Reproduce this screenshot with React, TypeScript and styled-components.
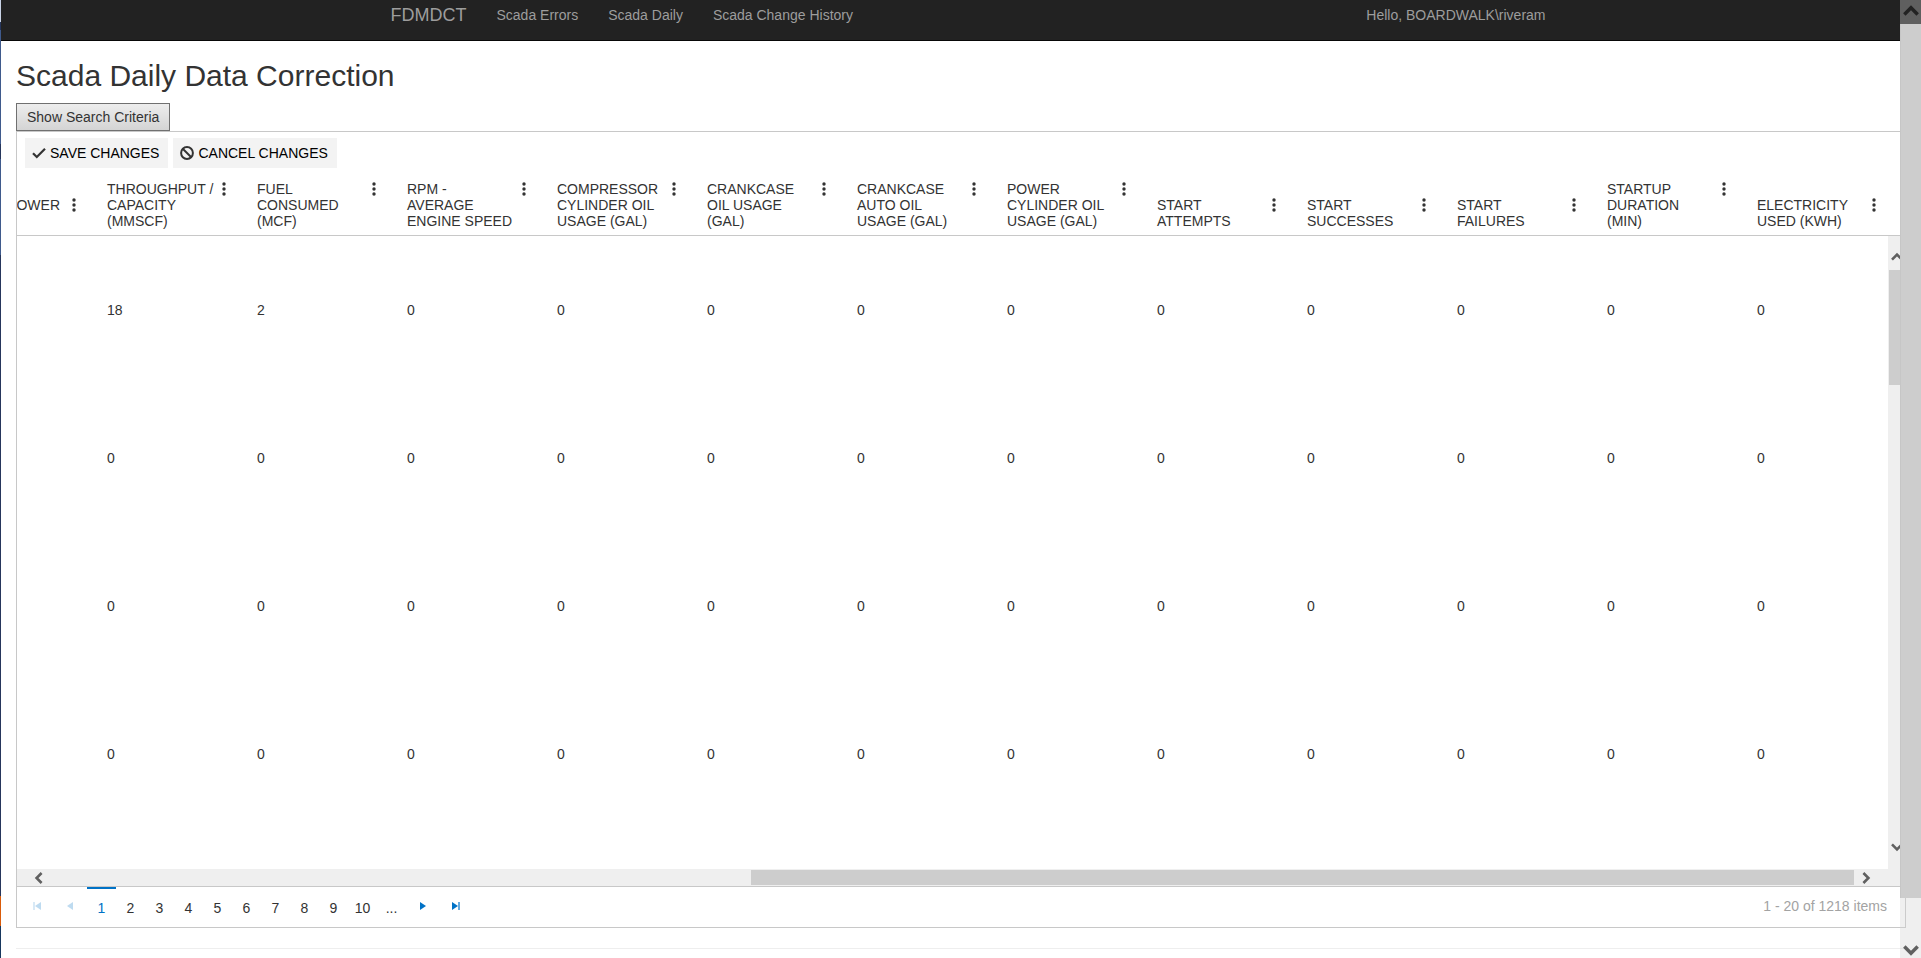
import React from "react";
import styled, { createGlobalStyle, css } from "styled-components";

const Global = createGlobalStyle`
  * { box-sizing: border-box; }
  html, body { margin: 0; height: 100%; overflow: hidden; }
  #root { height: 100%; }
  body {
    background: #fff;
    color: #333;
    font: 14px/20px "Liberation Sans", Arial, sans-serif;
  }
  button { font: inherit; color: inherit; border: 0; background: none; padding: 0; margin: 0; }
  a { color: inherit; text-decoration: none; }
`;

const Page = styled.div`
  position: relative;
  min-height: 100vh;
`;

const NavBar = styled.nav`
  height: 41px;
  background: #222;
  border-bottom: 1px solid #080808;
  color: #9d9d9d;
`;

const NavInner = styled.div`
  max-width: 1170px;
  margin: 0 auto;
  padding: 5px 0 0;
  display: flex;
  align-items: center;
`;

const Brand = styled.a`
  padding: 0 15px;
  font-size: 18px;
`;

const NavLink = styled.a`
  padding: 0 15px;
`;

const Greeting = styled.span`
  margin-left: auto;
`;

const Content = styled.main`
  padding: 18px 15px 0 16px;
`;

const Title = styled.h2`
  margin: 0 0 11px;
  font-size: 30px;
  line-height: 33px;
  font-weight: normal;
`;

const CriteriaButton = styled.button`
  display: block;
  height: 28px;
  padding: 0 10px;
  border: 1px solid #707070;
  background: linear-gradient(#ededed, #d4d4d4);
`;

const Grid = styled.section`
  border: 1px solid #c8c8c8;
`;

const Toolbar = styled.div`
  display: flex;
  gap: 5px;
  padding: 6px 8px;
`;

const ToolButton = styled.button`
  display: flex;
  align-items: center;
  gap: 4px;
  height: 30px;
  padding: 0 9px 0 7px;
  background: #f3f3f3;
  color: #000;
  text-transform: uppercase;
`;

const TableView = styled.div`
  display: flex;
  align-items: flex-start;
  justify-content: flex-end;
  overflow: hidden;
  min-width: 0;
  flex: 1;
`;

const HeadView = styled(TableView)`
  padding-right: 17px;
  border-bottom: 1px solid #c8c8c8;
`;

const Table = styled.table`
  flex: none;
  width: 1950px;
  table-layout: fixed;
  border-collapse: collapse;
`;

const HeadCell = styled.th`
  padding: 7px 7px 6px 19px;
  text-align: left;
  vertical-align: bottom;
  font-weight: normal;
  line-height: 16px;
`;

const HeadContent = styled.div`
  display: flex;
  align-items: flex-start;
  justify-content: space-between;
`;

const FirstHead = styled(HeadContent)`
  justify-content: flex-end;
  gap: 7px;
  padding-bottom: 16px;
`;

const HeadText = styled.span`
  white-space: pre;
`;

const MenuButton = styled.button`
  display: flex;
  flex: none;
  justify-content: center;
  width: 14px;
  height: 16px;
`;

const Cell = styled.td`
  height: 148px;
  padding: 0 0 0 19px;
  vertical-align: middle;
`;

const BodyArea = styled.div`
  display: flex;
  height: 633px;
`;

const track = css`
  display: flex;
  align-items: center;
  background: #efefef;
`;

const VerticalTrack = styled.div`
  ${track}
  flex: none;
  flex-direction: column;
  justify-content: space-between;
  width: 17px;
  padding: 15px 0 16px;
`;

const VerticalThumb = styled.div`
  width: 15px;
  height: 115px;
  margin: 7px 0 auto;
  background: #cdcdcd;
`;

const HorizontalTrack = styled.div`
  ${track}
  height: 17px;
  padding: 0 33px 0 16px;
`;

const HorizontalRun = styled.div`
  flex: 1;
  height: 15px;
  margin-right: 6px;
  display: flex;
  justify-content: flex-end;
`;

const HorizontalThumb = styled.div`
  width: 61%;
  background: #cdcdcd;
`;

const Pager = styled.div`
  display: flex;
  align-items: stretch;
  height: 41px;
  border-top: 1px solid #c8c8c8;
  padding: 0 18px 0 4px;
`;

const PagerArrow = styled.button<{ $off?: boolean }>`
  display: flex;
  align-items: center;
  justify-content: center;
  width: 33px;
  padding: 0 ${(p) => (p.$off ? 2 : 0)}px 2px 0;
  color: #0072c6;
  opacity: ${(p) => (p.$off ? 0.25 : 1)};
`;

const PageNumber = styled.button<{ $current?: boolean }>`
  width: 29px;
  border-top: 2px solid ${(p) => (p.$current ? "#0072c6" : "transparent")};
  color: ${(p) => (p.$current ? "#0072c6" : "#333")};
`;

const PagerInfo = styled.span`
  margin-left: auto;
  align-self: center;
  padding-bottom: 2px;
  color: #a3a3a3;
`;

const Rule = styled.hr`
  margin: 20px 0 0;
  border: 0;
  border-top: 1px solid #eee;
`;

const PageScroll = styled.div`
  position: absolute;
  top: 0;
  right: 0;
  bottom: 0;
  width: 21px;
  display: flex;
  flex-direction: column;
  align-items: center;
  padding: 3px 1px 0;
  background: rgba(209, 209, 209, 0.35);
`;

const PageThumb = styled.div`
  flex: 1;
  width: 100%;
  margin: 5px 0 44px;
  background: #cdcdcd;
  box-shadow: -1px 0 #c6c6c6, 1px 0 #cdcdcd;
`;

const WindowEdge = styled.div`
  position: absolute;
  top: 0;
  left: 0;
  bottom: 0;
  width: 1px;
  background: linear-gradient(#c9d3e6 22px, #26365c 22px 30px, #3f5a8c 30px 144px, #26365c 144px 159px, #3f5a8c 159px 255px, #26365c 255px 896px, #d95b0a 896px 926px, #17375e 926px);
`;

type Direction = "up" | "down" | "left" | "right";
const turns: Record<Direction, number> = { up: 0, right: 90, down: 180, left: 270 };

const ChevronIcon = styled.svg`
  flex: none;
`;

const Chevron = ({ to, size = 12, color = "#606060" }: { to: Direction; size?: number; color?: string }) => (
  <ChevronIcon width={size} height={size} viewBox="0 0 12 12" aria-hidden="true">
    <path d="M1 8.6 6 3.6 11 8.6" fill="none" stroke={color} strokeWidth="2.6" transform={`rotate(${turns[to]} 6 6)`} />
  </ChevronIcon>
);

const Dots = () => (
  <svg width="4" height="15" viewBox="0 0 4 15" fill="#333" aria-hidden="true">
    <circle cx="2" cy="3" r="1.7" />
    <circle cx="2" cy="8" r="1.7" />
    <circle cx="2" cy="13" r="1.7" />
  </svg>
);

const Check = () => (
  <svg width="14" height="12" viewBox="0 0 14 12" aria-hidden="true">
    <path d="M1 6.2 4.8 10 13 1.8" fill="none" stroke="#333" strokeWidth="2.2" />
  </svg>
);

const Ban = () => (
  <svg width="14" height="14" viewBox="0 0 14 14" aria-hidden="true">
    <circle cx="7" cy="7" r="5.9" fill="none" stroke="#333" strokeWidth="2" />
    <path d="M3 3 11 11" stroke="#333" strokeWidth="2" />
  </svg>
);

const Triangle = ({ back, bar }: { back?: boolean; bar?: boolean }) => (
  <svg width="8" height="8" viewBox="0 0 8 8" fill="currentColor" aria-hidden="true">
    <g transform={back ? "matrix(-1 0 0 1 8 0)" : undefined}>
      <path d={bar ? "M0 0 6 4 0 8Z" : "M1 0 7 4 1 8Z"} />
      {bar && <path d="M6 0H8V8H6Z" opacity="0.6" />}
    </g>
  </svg>
);

const columns = [
  "OWER",
  "THROUGHPUT /\nCAPACITY\n(MMSCF)",
  "FUEL\nCONSUMED\n(MCF)",
  "RPM -\nAVERAGE\nENGINE SPEED",
  "COMPRESSOR\nCYLINDER OIL\nUSAGE (GAL)",
  "CRANKCASE\nOIL USAGE\n(GAL)",
  "CRANKCASE\nAUTO OIL\nUSAGE (GAL)",
  "POWER\nCYLINDER OIL\nUSAGE (GAL)",
  "START\nATTEMPTS",
  "START\nSUCCESSES",
  "START\nFAILURES",
  "STARTUP\nDURATION\n(MIN)",
  "ELECTRICITY\nUSED (KWH)",
];

const rows = [
  ["", 18, 2, 0, 0, 0, 0, 0, 0, 0, 0, 0, 0],
  ["", 0, 0, 0, 0, 0, 0, 0, 0, 0, 0, 0, 0],
  ["", 0, 0, 0, 0, 0, 0, 0, 0, 0, 0, 0, 0],
  ["", 0, 0, 0, 0, 0, 0, 0, 0, 0, 0, 0, 0],
];

const pages = ["1", "2", "3", "4", "5", "6", "7", "8", "9", "10", "..."];

export default function App() {
  return (
    <Page>
      <Global />
      <NavBar>
        <NavInner>
          <Brand href="#">FDMDCT</Brand>
          <NavLink href="#">Scada Errors</NavLink>
          <NavLink href="#">Scada Daily</NavLink>
          <NavLink href="#">Scada Change History</NavLink>
          <Greeting>Hello, BOARDWALK\riveram</Greeting>
        </NavInner>
      </NavBar>
      <Content>
        <Title>Scada Daily Data Correction</Title>
        <CriteriaButton type="button">Show Search Criteria</CriteriaButton>
        <Grid>
          <Toolbar>
            <ToolButton type="button"><Check />Save changes</ToolButton>
            <ToolButton type="button"><Ban />Cancel changes</ToolButton>
          </Toolbar>
          <HeadView>
            <Table>
              <thead>
                <tr>
                  {columns.map((name, i) => {
                    const Wrap = i === 0 ? FirstHead : HeadContent;
                    return (
                      <HeadCell key={name} scope="col">
                        <Wrap>
                          <HeadText>{name}</HeadText>
                          <MenuButton type="button" aria-label="Column menu"><Dots /></MenuButton>
                        </Wrap>
                      </HeadCell>
                    );
                  })}
                </tr>
              </thead>
            </Table>
          </HeadView>
          <BodyArea>
            <TableView>
              <Table>
                <tbody>
                  {rows.map((row, r) => (
                    <tr key={r}>
                      {row.map((value, c) => <Cell key={c}>{value}</Cell>)}
                    </tr>
                  ))}
                </tbody>
              </Table>
            </TableView>
            <VerticalTrack>
              <Chevron to="up" />
              <VerticalThumb />
              <Chevron to="down" />
            </VerticalTrack>
          </BodyArea>
          <HorizontalTrack>
            <Chevron to="left" />
            <HorizontalRun><HorizontalThumb /></HorizontalRun>
            <Chevron to="right" />
          </HorizontalTrack>
          <Pager>
            <PagerArrow type="button" $off aria-label="First page"><Triangle back bar /></PagerArrow>
            <PagerArrow type="button" $off aria-label="Previous page"><Triangle back /></PagerArrow>
            {pages.map((p, i) => (
              <PageNumber key={p} type="button" $current={i === 0}>{p}</PageNumber>
            ))}
            <PagerArrow type="button" aria-label="Next page"><Triangle /></PagerArrow>
            <PagerArrow type="button" aria-label="Last page"><Triangle bar /></PagerArrow>
            <PagerInfo>1 - 20 of 1218 items</PagerInfo>
          </Pager>
        </Grid>
        <Rule />
      </Content>
      <PageScroll>
        <Chevron to="up" size={16} color="#222" />
        <PageThumb />
        <Chevron to="down" size={16} />
      </PageScroll>
      <WindowEdge />
    </Page>
  );
}
